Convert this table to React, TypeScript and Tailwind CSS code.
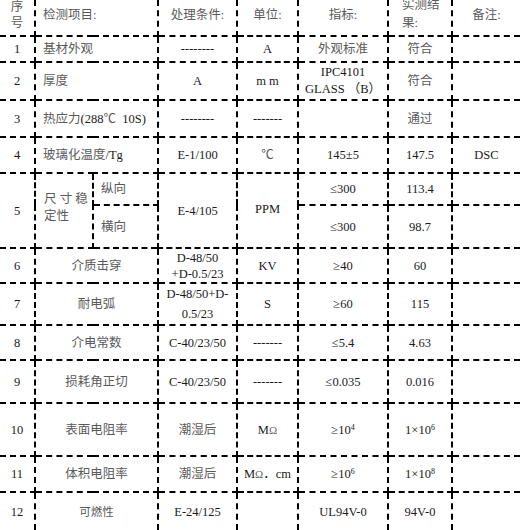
const cell = "border-2 border-dashed border-black text-center align-middle p-0";
const first = "border-l-0";
const last = "border-r-0";

function Z({ children }: { children: React.ReactNode }) {
  return <span className="text-[#5a5a5a]">{children}</span>;
}

function Om() {
  return <span className="text-[11px] text-[#666]">Ω</span>;
}

export default function App() {
  return (
    <div className="w-[520px] h-[530px] overflow-hidden bg-white font-['Liberation_Serif','Noto_Sans_CJK_SC',serif] text-[12.5px] leading-[14px] text-[#1a1a1a]">
      <table className="w-[520px] table-fixed border-collapse">
        <colgroup>
          <col className="w-[35px]" />
          <col className="w-[58px]" />
          <col className="w-[65px]" />
          <col className="w-[79px]" />
          <col className="w-[61px]" />
          <col className="w-[90px]" />
          <col className="w-[64px]" />
          <col className="w-[68px]" />
        </colgroup>
        <tbody>
          <tr className="h-[36px]">
            <td className={`${cell} ${first} border-t-0`}>
              <div className="-mt-[6px] leading-[16px]"><Z>序<br />号</Z></div>
            </td>
            <td colSpan={2} className={`${cell} border-t-0 text-left pl-[7px]`}>
              <div className="-mt-[5px]"><Z>检测项目:</Z></div>
            </td>
            <td className={`${cell} border-t-0`}><div className="-mt-[5px]"><Z>处理条件:</Z></div></td>
            <td className={`${cell} border-t-0`}><div className="-mt-[5px]"><Z>单位:</Z></div></td>
            <td className={`${cell} border-t-0`}><div className="-mt-[5px]"><Z>指标:</Z></div></td>
            <td className={`${cell} border-t-0 text-left pl-[13px]`}>
              <div className="-mt-[8px] leading-[18px]"><Z>实测结<br />果:</Z></div>
            </td>
            <td className={`${cell} ${last} border-t-0`}><div className="-mt-[5px]"><Z>备注:</Z></div></td>
          </tr>
          <tr className="h-[26px]">
            <td className={`${cell} ${first}`}>1</td>
            <td colSpan={2} className={`${cell} text-left pl-[7px]`}><Z>基材外观</Z></td>
            <td className={cell}>--------</td>
            <td className={cell}>A</td>
            <td className={cell}><Z>外观标准</Z></td>
            <td className={cell}><Z>符合</Z></td>
            <td className={`${cell} ${last}`}></td>
          </tr>
          <tr className="h-[38px]">
            <td className={`${cell} ${first}`}>2</td>
            <td colSpan={2} className={`${cell} text-left pl-[7px]`}><Z>厚度</Z></td>
            <td className={cell}>A</td>
            <td className={cell}>m m</td>
            <td className={`${cell} leading-[17px]`}>IPC4101<br />GLASS （B）</td>
            <td className={cell}><Z>符合</Z></td>
            <td className={`${cell} ${last}`}></td>
          </tr>
          <tr className="h-[37px]">
            <td className={`${cell} ${first}`}>3</td>
            <td colSpan={2} className={`${cell} text-left pl-[7px]`}><Z>热应力</Z>(288<Z>℃</Z>&nbsp;&nbsp;10S)</td>
            <td className={cell}>--------</td>
            <td className={cell}>-------</td>
            <td className={cell}></td>
            <td className={cell}><Z>通过</Z></td>
            <td className={`${cell} ${last}`}></td>
          </tr>
          <tr className="h-[36px]">
            <td className={`${cell} ${first}`}>4</td>
            <td colSpan={2} className={`${cell} text-left pl-[7px]`}><Z>玻璃化温度</Z>/Tg</td>
            <td className={cell}>E-1/100</td>
            <td className={cell}><Z>℃</Z></td>
            <td className={cell}>145±5</td>
            <td className={cell}>147.5</td>
            <td className={`${cell} ${last}`}>DSC</td>
          </tr>
          <tr className="h-[32px]">
            <td rowSpan={2} className={`${cell} ${first}`}>5</td>
            <td rowSpan={2} className={`${cell} text-left pl-[8px]`}>
              <div className="-mt-[6px] leading-[17px]"><Z>尺&nbsp;寸&nbsp;稳<br />定性</Z></div>
            </td>
            <td className={`${cell} text-left pl-[7px]`}><Z>纵向</Z></td>
            <td rowSpan={2} className={cell}>E-4/105</td>
            <td rowSpan={2} className={cell}><div className="-mt-[4px]">PPM</div></td>
            <td className={cell}>≤300</td>
            <td className={cell}>113.4</td>
            <td className={`${cell} ${last}`}></td>
          </tr>
          <tr className="h-[43px]">
            <td className={`${cell} text-left pl-[7px]`}><Z>横向</Z></td>
            <td className={cell}>≤300</td>
            <td className={cell}>98.7</td>
            <td className={`${cell} ${last}`}></td>
          </tr>
          <tr className="h-[35px]">
            <td className={`${cell} ${first}`}>6</td>
            <td colSpan={2} className={cell}><Z>介质击穿</Z></td>
            <td className={`${cell} leading-[16px]`}>D-48/50<br />+D-0.5/23</td>
            <td className={cell}>KV</td>
            <td className={cell}>≥40</td>
            <td className={cell}>60</td>
            <td className={`${cell} ${last}`}></td>
          </tr>
          <tr className="h-[42px]">
            <td className={`${cell} ${first}`}>7</td>
            <td colSpan={2} className={cell}><Z>耐电弧</Z></td>
            <td className={`${cell} leading-[20px]`}>D-48/50+D-<br />0.5/23</td>
            <td className={cell}>S</td>
            <td className={cell}>≥60</td>
            <td className={cell}>115</td>
            <td className={`${cell} ${last}`}></td>
          </tr>
          <tr className="h-[35px]">
            <td className={`${cell} ${first}`}>8</td>
            <td colSpan={2} className={cell}><Z>介电常数</Z></td>
            <td className={cell}>C-40/23/50</td>
            <td className={cell}>-------</td>
            <td className={cell}>≤5.4</td>
            <td className={cell}>4.63</td>
            <td className={`${cell} ${last}`}></td>
          </tr>
          <tr className="h-[43px]">
            <td className={`${cell} ${first}`}>9</td>
            <td colSpan={2} className={cell}><Z>损耗角正切</Z></td>
            <td className={cell}>C-40/23/50</td>
            <td className={cell}>-------</td>
            <td className={cell}>≤0.035</td>
            <td className={cell}>0.016</td>
            <td className={`${cell} ${last}`}></td>
          </tr>
          <tr className="h-[53px]">
            <td className={`${cell} ${first}`}>10</td>
            <td colSpan={2} className={cell}><Z>表面电阻率</Z></td>
            <td className={cell}><Z>潮湿后</Z></td>
            <td className={cell}>M<Om /></td>
            <td className={cell}>≥10<sup className="text-[8px]">4</sup></td>
            <td className={cell}>1×10<sup className="text-[8px]">6</sup></td>
            <td className={`${cell} ${last}`}></td>
          </tr>
          <tr className="h-[36px]">
            <td className={`${cell} ${first}`}>11</td>
            <td colSpan={2} className={cell}><Z>体积电阻率</Z></td>
            <td className={cell}><Z>潮湿后</Z></td>
            <td className={cell}>M<Om />．cm</td>
            <td className={cell}>≥10<sup className="text-[8px]">6</sup></td>
            <td className={cell}>1×10<sup className="text-[8px]">8</sup></td>
            <td className={`${cell} ${last}`}></td>
          </tr>
          <tr className="h-[38px]">
            <td className={`${cell} ${first} border-b-0`}>12</td>
            <td colSpan={2} className={`${cell} border-b-0 text-[11.5px]`}><Z>可燃性</Z></td>
            <td className={`${cell} border-b-0`}>E-24/125</td>
            <td className={`${cell} border-b-0`}></td>
            <td className={`${cell} border-b-0`}>UL94V-0</td>
            <td className={`${cell} border-b-0`}>94V-0</td>
            <td className={`${cell} ${last} border-b-0`}></td>
          </tr>
        </tbody>
      </table>
    </div>
  );
}
